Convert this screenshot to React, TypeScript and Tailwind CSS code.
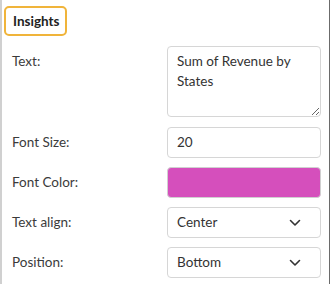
import React from "react";

const font = { fontFamily: '"Lato", "Noto Sans", sans-serif' };

function Chevron() {
  return (
    <svg width="12" height="8" viewBox="0 0 12 8" fill="none" className="shrink-0">
      <path d="M1.5 1.5 L6 6 L10.5 1.5" stroke="#333" strokeWidth="1.6" strokeLinecap="round" strokeLinejoin="round" />
    </svg>
  );
}

function Row({ label, children }: { label: string; children: React.ReactNode }) {
  return (
    <div className="flex items-center h-[31px]">
      <div className="w-[163px] pl-[8px] text-[13.5px] text-[#3b3b3b]">{label}</div>
      <div className="w-[154px] h-full">{children}</div>
    </div>
  );
}

export default function App() {
  return (
    <div className="w-[332px] h-[284px] bg-white flex" style={font}>
      <div className="w-[2px] h-full bg-[#d0d0d0]" />
      <div className="w-[327px] h-full pl-[2px] pt-[6px] flex flex-col">
        <div className="w-[63px] h-[30px] border-2 border-[#f0b43a] rounded-[5px] flex items-center pl-[7px] text-[13.5px] font-bold text-[#222]">
          Insights
        </div>
        <div className="flex items-start mt-[10px]">
          <div className="w-[163px] pl-[8px] pt-[5px] text-[13.5px] leading-[20px] text-[#3b3b3b]">Text:</div>
          <textarea
            className="w-[154px] h-[71px] border border-[#d6d6d6] rounded-[4px] px-[9px] pt-[4px] text-[13.5px] leading-[20px] text-[#333] outline-none"
            style={font}
            defaultValue="Sum of Revenue by States"
          />
        </div>
        <div className="flex flex-col gap-[9px] mt-[10px]">
          <Row label="Font Size:">
            <div className="h-full border border-[#d6d6d6] rounded-[4px] flex items-center px-[9px] text-[13.5px] text-[#333]">20</div>
          </Row>
          <Row label="Font Color:">
            <div className="h-full border border-[#d0d0d0] rounded-[4px] bg-[#d54fbc]" />
          </Row>
          <Row label="Text align:">
            <div className="h-full border border-[#d6d6d6] rounded-[4px] flex items-center justify-between pl-[9px] pr-[19px] text-[13.5px] text-[#333]">
              <span>Center</span>
              <Chevron />
            </div>
          </Row>
          <Row label="Position:">
            <div className="h-full border border-[#d6d6d6] rounded-[4px] flex items-center justify-between pl-[9px] pr-[19px] text-[13.5px] text-[#333]">
              <span>Bottom</span>
              <Chevron />
            </div>
          </Row>
        </div>
      </div>
      <div className="w-[1px] h-full bg-[#6b6b6b]" />
      <div className="w-[2px] h-full bg-white" />
    </div>
  );
}
